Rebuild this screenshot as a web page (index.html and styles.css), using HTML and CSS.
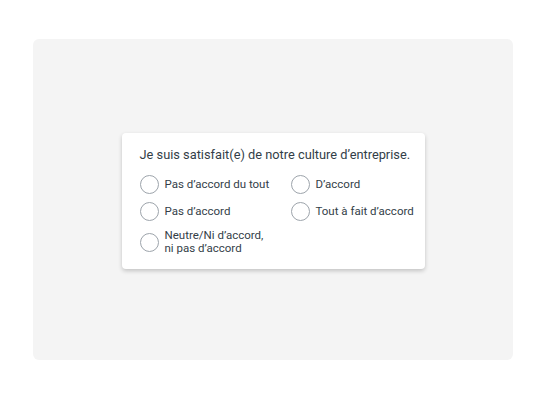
FILE: index.html
```html
<!DOCTYPE html>
<html lang="fr">
<head>
    <meta charset="UTF-8">
    <meta name="viewport" content="width=device-width, initial-scale=1.0">
    <title>Question</title>
    <link rel="stylesheet" href="styles.css">
</head>
<body>
    <div class="panel">
        <div class="question-card">
            <div class="question-title">Je suis satisfait(e) de notre culture d’entreprise.</div>
            <div class="choices">
                <label class="choice">
                    <span class="radio"></span>
                    <span class="choice-label">Pas d’accord du tout</span>
                </label>
                <label class="choice">
                    <span class="radio"></span>
                    <span class="choice-label">Pas d’accord</span>
                </label>
                <label class="choice">
                    <span class="radio"></span>
                    <span class="choice-label">Neutre/Ni d’accord,<br>ni pas d’accord</span>
                </label>
                <label class="choice">
                    <span class="radio"></span>
                    <span class="choice-label">D’accord</span>
                </label>
                <label class="choice">
                    <span class="radio"></span>
                    <span class="choice-label">Tout à fait d’accord</span>
                </label>
            </div>
        </div>
    </div>
</body>
</html>
```

FILE: styles.css
```css
* {
    margin: 0;
    padding: 0;
    box-sizing: border-box;
}

body {
    background: #ffffff;
    color: #333e48;
    font-family: Roboto, 'Noto Sans', sans-serif;
    width: 546px;
    height: 400px;
    padding: 39px 33px 40px 33px;
}

.panel {
    background: #f4f4f4;
    border-radius: 6px;
    width: 480px;
    height: 321px;
    display: flex;
    align-items: center;
    justify-content: center;
}

.question-card {
    background: #ffffff;
    width: 303px;
    margin-top: 3px;
    padding: 13px 4px 14px 18px;
    border-radius: 4px;
    box-shadow: 0 2px 4px rgba(0, 0, 0, 0.2);
}

.question-title {
    font-size: 12.8px;
    line-height: 18px;
    margin-bottom: 11px;
    white-space: nowrap;
    color: #333e48;
}

.choices {
    display: grid;
    grid-template-columns: 151px auto;
    grid-template-rows: repeat(3, auto);
    grid-auto-flow: column;
    row-gap: 8px;
}

.choice {
    display: flex;
    align-items: center;
    gap: 6px;
    font-size: 11.5px;
    line-height: 13px;
    white-space: nowrap;
    color: #333e48;
}

.radio {
    width: 19px;
    height: 19px;
    flex-shrink: 0;
    border: 1px solid #9da4ab;
    border-radius: 50%;
    background: #ffffff;
}
```
